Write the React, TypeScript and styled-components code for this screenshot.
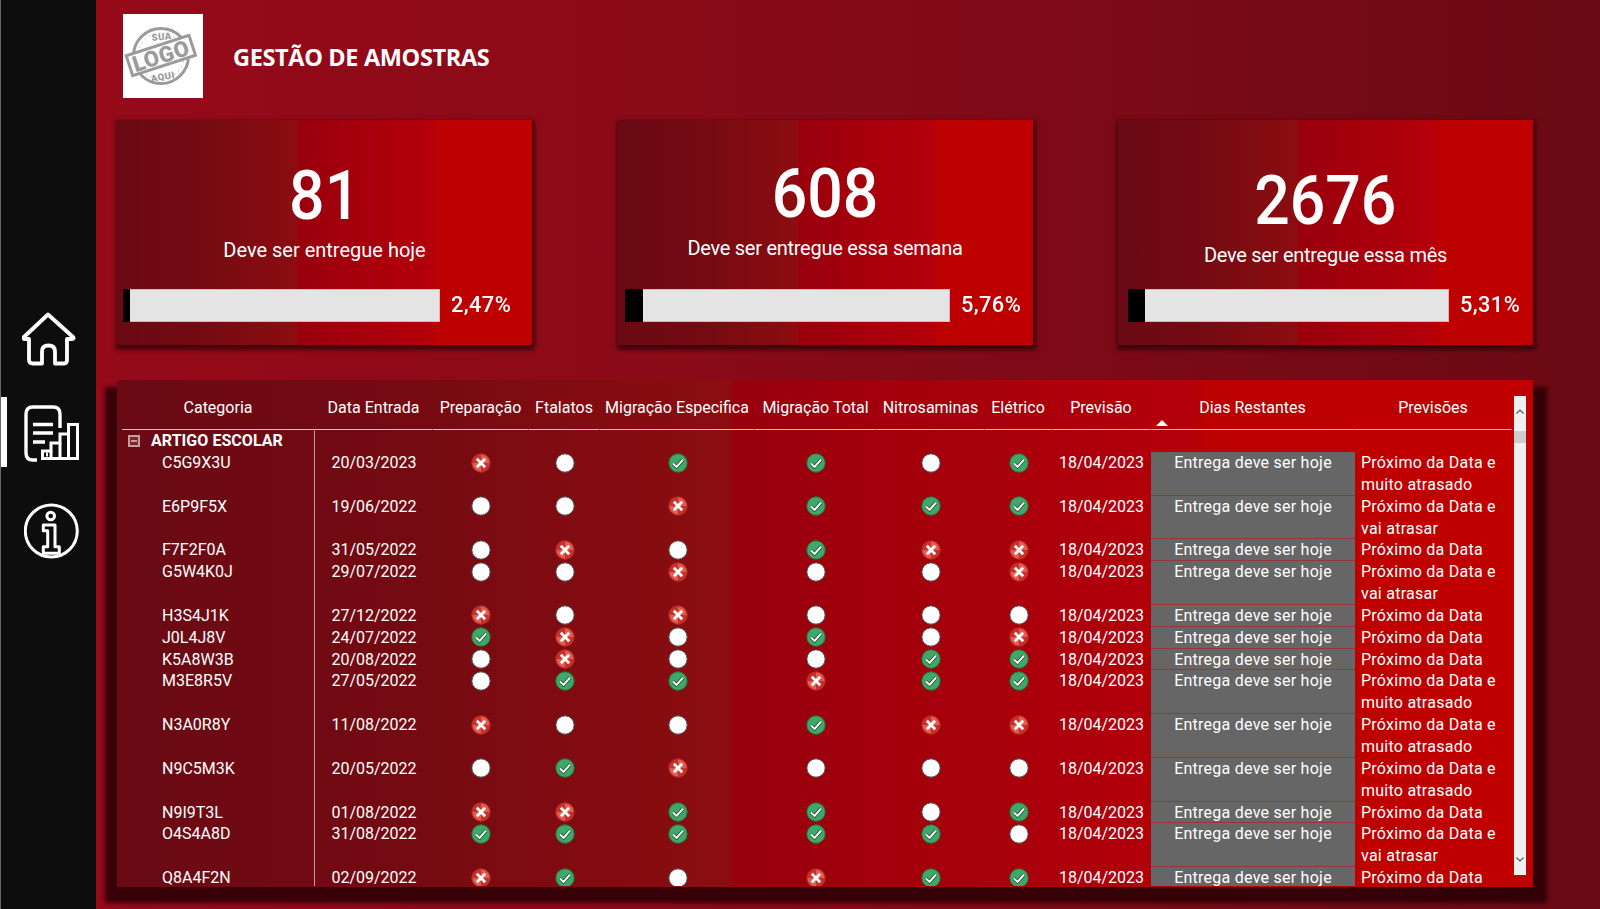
import React from "react";
import styled, { createGlobalStyle, css } from "styled-components";

const GlobalStyle = createGlobalStyle`
  html, body { margin: 0; padding: 0; height: 909px; overflow: hidden; background: #7c0a16; }
  #root { height: 909px; }
  * { box-sizing: border-box; }
`;

const redBands = css`
  background: linear-gradient(90deg, #6a0a14 0%, #740a12 20%, #8c0d10 43.2%, #98000c 43.6%, #a8000c 62%, #b4000a 76%, #bb0000 77%, #c00000 100%);
`;

const Page = styled.div`
  display: flex;
  width: 1600px;
  height: 909px;
  font-family: Roboto, "Open Sans", sans-serif;
  color: #fff;
`;

const Sidebar = styled.nav`
  position: relative;
  width: 96px;
  flex: none;
  background: #0d0d0d;
  border-left: 1px solid #6a6a6a;
  padding-top: 312px;
  display: flex;
  flex-direction: column;
  align-items: flex-start;
`;

const NavIcon = styled.div<{ $left: number; $top: number }>`
  margin-left: ${(p) => p.$left}px;
  margin-top: ${(p) => p.$top}px;
  line-height: 0;
`;

const ActiveMark = styled.div`
  position: absolute;
  left: 0;
  top: 397px;
  width: 6px;
  height: 70px;
  background: #fff;
`;

const Main = styled.main`
  flex: 1;
  min-width: 0;
  background: linear-gradient(90deg, #960a1a 0%, #8a0a18 40%, #6a0a14 100%);
  padding: 14px 0 0 21px;
`;

const Header = styled.header`
  display: flex;
  align-items: center;
  margin-left: 6px;
  height: 84px;
`;

const LogoBox = styled.div`
  width: 80px;
  height: 84px;
  background: #fff;
  line-height: 0;
`;

const Title = styled.h1`
  margin: 2px 0 0 30px;
  font-family: "Open Sans", Roboto, sans-serif;
  font-size: 23.5px;
  font-weight: 700;
  letter-spacing: -0.35px;
`;

const Cards = styled.section`
  display: flex;
  gap: 85.5px;
  margin-top: 22px;
`;

const Card = styled.article<{ $top: number }>`
  ${redBands}
  width: 415px;
  height: 225px;
  padding-top: ${(p) => p.$top}px;
  display: flex;
  flex-direction: column;
  align-items: center;
  box-shadow: 1px 3px 4px 2px rgba(40, 0, 5, 0.7);
`;

const BigNumber = styled.div`
  font-size: 68px;
  line-height: 60px;
  height: 60px;
  font-weight: 500;
  transform: scaleX(0.92);
`;

const CardLabel = styled.div<{ $spacing: number }>`
  margin-top: 10px;
  font-size: 20px;
  letter-spacing: ${(p) => p.$spacing}px;
  line-height: 28px;
  height: 28px;
`;

const BarRow = styled.div<{ $pad: number }>`
  margin-top: auto;
  align-self: stretch;
  padding: 0 0 23px ${(p) => p.$pad}px;
  display: flex;
  align-items: center;
`;

const Bar = styled.div<{ $width: number }>`
  width: ${(p) => p.$width}px;
  height: 33px;
  display: flex;
`;

const BarFill = styled.div`
  background: #000;
  height: 100%;
`;

const BarTrack = styled.div`
  flex: 1;
  background: #e4e4e4;
  border: 1px solid #d9b8b8;
  border-left: 0;
`;

const Percent = styled.div`
  margin: 0 0 3px 11px;
  font-size: 22.5px;
  font-weight: 500;
  letter-spacing: 0.4px;
  transform: scaleX(0.97);
  transform-origin: left center;
`;

const Panel = styled.section`
  position: relative;
  ${redBands}
  width: 1416px;
  height: 507px;
  margin-top: 35px;
  padding-left: 5px;
  &::before {
    content: "";
    position: absolute;
    z-index: -1;
    left: -12px;
    right: -14px;
    top: 7px;
    bottom: -16px;
    background: rgba(40, 0, 5, 0.85);
    filter: blur(2px);
  }
`;

const PanelLayer = styled.div`
  position: relative;
  isolation: isolate;
`;

const columns = "193px 118px 96px 71px 155px 122px 108px 67px 99px 204px 157px";

const HeadRow = styled.div`
  display: grid;
  grid-template-columns: ${columns};
  height: 49.5px;
`;

const HeadCell = styled.div`
  position: relative;
  display: flex;
  align-items: flex-start;
  justify-content: center;
  padding-top: 17px;
  font-size: 16px;
  line-height: 22px;
  white-space: nowrap;
  border-bottom: 1.5px solid #d6c2c2;
  border-right: 1px solid transparent;
`;

const SortMark = styled.span`
  position: absolute;
  left: 5px;
  bottom: 3px;
  width: 0;
  height: 0;
  border-left: 6px solid transparent;
  border-right: 6px solid transparent;
  border-bottom: 6px solid #fff;
`;

const Body = styled.div`
  height: 456.5px;
  overflow: hidden;
`;

const GroupRow = styled.div`
  display: grid;
  grid-template-columns: ${columns};
  height: 22.5px;
`;

const GroupCell = styled.div`
  display: flex;
  align-items: center;
  gap: 11px;
  padding-left: 6px;
  font-size: 16px;
  font-weight: 700;
  letter-spacing: 0.05px;
  border-right: 1px solid #b8a0a0;
`;

const Expander = styled.span`
  width: 12px;
  height: 12px;
  border: 2px solid rgba(255, 255, 255, 0.55);
  background: linear-gradient(rgba(255, 255, 255, 0.55), rgba(255, 255, 255, 0.55)) center / 6px 2px no-repeat, rgba(255, 255, 255, 0.12);
`;

const Row = styled.div`
  display: grid;
  grid-template-columns: ${columns};
  align-items: stretch;
`;

const Cell = styled.div`
  font-size: 16px;
  line-height: 21.85px;
  min-height: 21.85px;
  text-align: center;
  white-space: nowrap;
`;

const NameCell = styled(Cell)`
  text-align: left;
  padding-left: 40px;
  border-right: 1px solid #b8a0a0;
`;

const IconCell = styled(Cell)`
  display: flex;
  justify-content: center;
  align-items: flex-start;
  padding-top: 0.5px;
`;

const DaysCell = styled(Cell)`
  background: #666;
  box-shadow: inset 0 -1px 0 #96383a;
  letter-spacing: 0.25px;
`;

const ForecastCell = styled(Cell)`
  text-align: left;
  padding-left: 6px;
  letter-spacing: 0.25px;
  white-space: normal;
`;

const ScrollBar = styled.div`
  position: absolute;
  right: 7px;
  top: 16px;
  width: 12px;
  height: 479px;
  background: #f0f0f0;
  line-height: 0;
`;

const Thumb = styled.div`
  position: absolute;
  left: 0;
  top: 35px;
  width: 100%;
  height: 12px;
  background: #cdcdcd;
`;

const ArrowUp = styled.div`
  position: absolute;
  top: 13px;
  left: 2px;
`;

const ArrowDown = styled.div`
  position: absolute;
  bottom: 13px;
  left: 2px;
`;

type Status = "x" | "c" | "o";

const StatusIcon = ({ s }: { s: Status }) => {
  if (s === "o")
    return (
      <svg width="20" height="20" viewBox="0 0 20 20">
        <circle cx="10" cy="10" r="9.2" fill="#fdfdfd" stroke="#4a4a4a" strokeWidth="1" />
      </svg>
    );
  if (s === "c")
    return (
      <svg width="20" height="20" viewBox="0 0 20 20">
        <circle cx="10" cy="10" r="9.2" fill="#3fa767" stroke="#1f7a45" strokeWidth="1" />
        <path d="M5 10.5l3.6 3.4L15 6.6" fill="none" stroke="#17492b" strokeWidth="3.4" />
        <path d="M5 10.5l3.6 3.4L15 6.6" fill="none" stroke="#fff" strokeWidth="2" />
      </svg>
    );
  return (
    <svg width="20" height="20" viewBox="0 0 20 20">
      <circle cx="10" cy="10" r="9.2" fill="#c9302a" stroke="#b5302a" strokeWidth="1" />
      <path d="M10 1.500a8.500 8.500 0 0 1 8.500 8.500L10 10zM10 18.500A8.500 8.500 0 0 1 1.500 10L10 10z" fill="#ec6a5e" opacity="0.75" />
      <path d="M5.800 5.800l8.400 8.400M14.200 5.800l-8.400 8.400" stroke="#fff" strokeWidth="2.800" />
    </svg>
  );
};

const HomeIcon = () => (
  <svg width="54" height="54" viewBox="0 0 54 54" fill="none" stroke="#fff" strokeWidth="3.800" strokeLinejoin="round">
    <path d="M26 2.500L51 25Q52.500 27 50 27H45V48Q45 51.500 42 51.500H33V39.500Q33 33.500 26.500 33.500Q20 33.500 20 39.500V51.500H11Q7 51.500 7 48V27H3Q.5 27 2 25Z" />
  </svg>
);

const ReportIcon = () => (
  <svg width="80" height="75" viewBox="0 0 80 75" fill="none" stroke="#fff" strokeWidth="3.400">
    <path d="M27 65H23Q16 65 16 58V19Q16 12 23 12H43Q50 12 50 19V33" />
    <path d="M23 29.500H43M23 38H43M23 47H35" />
    <path d="M32.500 63.500V56H41V48H50V39H58.500V29.500H67.500V63.500Z" strokeWidth="3" />
    <path d="M41 56V63M50 48V63M58.500 39V63" strokeWidth="3" />
    <path d="M36 59.500h2" strokeWidth="4" />
  </svg>
);

const InfoIcon = () => (
  <svg width="56" height="58" viewBox="0 0 56 58" fill="none" stroke="#fff" strokeWidth="3">
    <circle cx="27.300" cy="29" r="26" />
    <circle cx="26.700" cy="14" r="3.800" />
    <path d="M19.300 23H31V44.700H35.300V51.300H19.300V44.700H23.700V28.700H19.300Z" strokeLinejoin="round" />
  </svg>
);

const StampLogo = () => (
  <svg width="80" height="84" viewBox="0 0 80 84" fontFamily="Roboto, sans-serif" fontWeight="900" fill="#9b9b9b">
    <circle cx="38" cy="42" r="27.500" fill="none" stroke="#9b9b9b" strokeWidth="3" />
    <circle cx="38" cy="42" r="23" fill="none" stroke="#b5b5b5" strokeWidth="0.800" strokeDasharray="2 3" />
    <g transform="rotate(-18 38 42)">
      <rect x="5" y="31" width="66" height="21" fill="#fff" stroke="#9b9b9b" strokeWidth="3" />
      <text x="38" y="49.500" textAnchor="middle" fontSize="22" letterSpacing="0.5">LOGO</text>
    </g>
    <text x="39" y="26" textAnchor="middle" fontSize="9.500" letterSpacing="0.5" transform="rotate(-6 39 26)">SUA</text>
    <text x="40" y="66" textAnchor="middle" fontSize="9.500" letterSpacing="0.5" transform="rotate(-10 40 64)">AQUI</text>
  </svg>
);

const Chevron = ({ up }: { up?: boolean }) => (
  <svg width="8" height="5" viewBox="0 0 8 5" fill="none" stroke="#555" strokeWidth="1.200">
    <path d={up ? "M.5 4.500L4 1l3.500 3.500" : "M.5.5L4 4l3.500-3.500"} />
  </svg>
);

const kpis = [
  { value: "81", label: "Deve ser entregue hoje", spacing: 0, pct: 2.47, pctText: "2,47%", top: 46, pad: 5.5, bar: 317.5 },
  { value: "608", label: "Deve ser entregue essa semana", spacing: -0.27, pct: 5.76, pctText: "5,76%", top: 44, pad: 7, bar: 325 },
  { value: "2676", label: "Deve ser entregue essa mês", spacing: -0.27, pct: 5.31, pctText: "5,31%", top: 51, pad: 9.5, bar: 321 },
];

const heads = ["Categoria", "Data Entrada", "Preparação", "Ftalatos", "Migração Especifica", "Migração Total", "Nitrosaminas", "Elétrico", "Previsão", "Dias Restantes", "Previsões"];

const F = {
  a: "Próximo da Data e muito atrasado",
  b: "Próximo da Data e vai atrasar",
  c: "Próximo da Data",
};

const rows: { id: string; date: string; st: string; f: string }[] = [
  { id: "C5G9X3U", date: "20/03/2023", st: "xoccoc", f: F.a },
  { id: "E6P9F5X", date: "19/06/2022", st: "ooxccc", f: F.b },
  { id: "F7F2F0A", date: "31/05/2022", st: "oxocxx", f: F.c },
  { id: "G5W4K0J", date: "29/07/2022", st: "ooxoox", f: F.b },
  { id: "H3S4J1K", date: "27/12/2022", st: "xoxooo", f: F.c },
  { id: "J0L4J8V", date: "24/07/2022", st: "cxocox", f: F.c },
  { id: "K5A8W3B", date: "20/08/2022", st: "oxoocc", f: F.c },
  { id: "M3E8R5V", date: "27/05/2022", st: "occxcc", f: F.a },
  { id: "N3A0R8Y", date: "11/08/2022", st: "xoocxx", f: F.a },
  { id: "N9C5M3K", date: "20/05/2022", st: "ocxooo", f: F.a },
  { id: "N9I9T3L", date: "01/08/2022", st: "xxccoc", f: F.c },
  { id: "O4S4A8D", date: "31/08/2022", st: "ccccco", f: F.b },
  { id: "Q8A4F2N", date: "02/09/2022", st: "xcoxcc", f: F.c },
];

export default function App() {
  return (
    <Page>
      <GlobalStyle />
      <Sidebar>
        <ActiveMark />
        <NavIcon $left={21} $top={0}><HomeIcon /></NavIcon>
        <NavIcon $left={9} $top={29}><ReportIcon /></NavIcon>
        <NavIcon $left={23} $top={32}><InfoIcon /></NavIcon>
      </Sidebar>
      <Main>
        <Header>
          <LogoBox><StampLogo /></LogoBox>
          <Title>GESTÃO DE AMOSTRAS</Title>
        </Header>
        <Cards>
          {kpis.map((k) => (
            <Card key={k.value} $top={k.top}>
              <BigNumber>{k.value}</BigNumber>
              <CardLabel $spacing={k.spacing}>{k.label}</CardLabel>
              <BarRow $pad={k.pad}>
                <Bar $width={k.bar}>
                  <BarFill style={{ width: `${k.pct}%` }} />
                  <BarTrack />
                </Bar>
                <Percent>{k.pctText}</Percent>
              </BarRow>
            </Card>
          ))}
        </Cards>
        <PanelLayer>
          <Panel>
            <HeadRow>
              {heads.map((h) => (
                <HeadCell key={h}>
                  {h}
                  {h === "Dias Restantes" && <SortMark />}
                </HeadCell>
              ))}
            </HeadRow>
            <Body>
              <GroupRow>
                <GroupCell><Expander />ARTIGO ESCOLAR</GroupCell>
              </GroupRow>
              {rows.map((r) => (
                <Row key={r.id}>
                  <NameCell>{r.id}</NameCell>
                  <Cell>{r.date}</Cell>
                  {r.st.split("").map((s, i) => (
                    <IconCell key={i}><StatusIcon s={s as Status} /></IconCell>
                  ))}
                  <Cell>18/04/2023</Cell>
                  <DaysCell>Entrega deve ser hoje</DaysCell>
                  <ForecastCell>{r.f}</ForecastCell>
                </Row>
              ))}
            </Body>
            <ScrollBar>
              <ArrowUp><Chevron up /></ArrowUp>
              <Thumb />
              <ArrowDown><Chevron /></ArrowDown>
            </ScrollBar>
          </Panel>
        </PanelLayer>
      </Main>
    </Page>
  );
}
